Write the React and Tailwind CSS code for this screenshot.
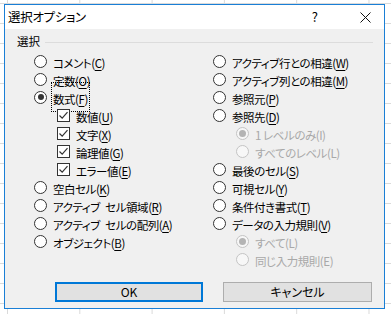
import React from "react";

const font = "[font-family:'Noto_Sans_CJK_JP','Noto_Sans',sans-serif] [font-feature-settings:'palt']";

function Radio({ checked, disabled }) {
  return (
    <span
      className={`flex items-center justify-center w-[13px] h-[13px] rounded-full border shrink-0 ${
        disabled ? "border-[#c4c4c4] bg-[#f7f7f7]" : "border-[#333333] bg-white"
      }`}
    >
      {checked && (
        <span
          className={`rounded-full ${
            disabled ? "w-[7px] h-[7px] bg-[#b4b4b4]" : "w-[6px] h-[6px] bg-[#333333]"
          }`}
        />
      )}
    </span>
  );
}

function Check() {
  return (
    <span className="flex items-center justify-center w-[13px] h-[13px] border border-[#333333] bg-white shrink-0">
      <svg width="11" height="11" viewBox="0 0 11 11">
        <path d="M1.5 5.5 L4.2 8.2 L9.5 2.2" fill="none" stroke="#333333" strokeWidth="1.2" />
      </svg>
    </span>
  );
}

function Label({ text, k, disabled, noUnderline }) {
  return (
    <span
      className={`text-[11.5px] tracking-[-0.45px] leading-none whitespace-pre ${
        disabled ? "text-[#a8a8a8]" : "text-black"
      }`}
    >
      {text}(
      {noUnderline ? k : <span className="underline underline-offset-[2px]">{k}</span>})
    </span>
  );
}

function Row({ kind = "radio", checked, disabled, indent, focus, text, k, noUnderline }) {
  return (
    <div className={`flex items-center h-[18px] ${indent ? "pl-[23px]" : ""}`}>
      {kind === "check" ? <Check /> : <Radio checked={checked} disabled={disabled} />}
      <span
        className={`ml-[4px] px-[1px] py-[2px] ${
          focus ? "border border-dotted border-black" : "border border-transparent"
        }`}
      >
        <Label text={text} k={k} disabled={disabled} noUnderline={noUnderline} />
      </span>
    </div>
  );
}

const leftRows = [
  { text: "コメント", k: "C" },
  { text: "定数", k: "O" },
  { text: "数式", k: "F", checked: true, focus: true },
  { kind: "check", indent: true, text: "数値", k: "U" },
  { kind: "check", indent: true, text: "文字", k: "X" },
  { kind: "check", indent: true, text: "論理値", k: "G" },
  { kind: "check", indent: true, text: "エラー値", k: "E" },
  { text: "空白セル", k: "K" },
  { text: "アクティブ\u2002セル領域", k: "R" },
  { text: "アクティブ\u2002セルの配列", k: "A" },
  { text: "オブジェクト", k: "B" },
];

const rightRows = [
  { text: "アクティブ行との相違", k: "W" },
  { text: "アクティブ列との相違", k: "M" },
  { text: "参照元", k: "P" },
  { text: "参照先", k: "D" },
  { indent: true, disabled: true, checked: true, text: "1 レベルのみ", k: "I", noUnderline: true },
  { indent: true, disabled: true, text: "すべてのレベル", k: "L", noUnderline: true },
  { text: "最後のセル", k: "S" },
  { text: "可視セル", k: "Y" },
  { text: "条件付き書式", k: "T" },
  { text: "データの入力規則", k: "V" },
  { indent: true, disabled: true, checked: true, text: "すべて", k: "L", noUnderline: true },
  { indent: true, disabled: true, text: "同じ入力規則", k: "E", noUnderline: true },
];

export default function App() {
  return (
    <div
      className={`w-[391px] h-[314px] overflow-hidden bg-white pt-[4px] pl-[4px] ${font} bg-[linear-gradient(to_right,#dadada_1px,transparent_1px),linear-gradient(to_bottom,#dadada_1px,transparent_1px)] bg-[size:72.3px_20px] bg-[position:7px_3px]`}
    >
      {/* dialog */}
      <div className="w-[381px] h-[305px] border border-[#1a7fd6] bg-[#f0f0f0] flex flex-col">
        {/* title bar */}
        <div className="h-[24px] bg-white flex items-center shrink-0">
          <span className="ml-[3px] text-[12.5px] tracking-[-0.3px] text-black">選択オプション</span>
          <span className="ml-auto mr-[42px] text-[13px] text-black">?</span>
          <svg className="mr-[13px]" width="11" height="11" viewBox="0 0 11 11">
            <path d="M0.5 0.5 L10.5 10.5 M10.5 0.5 L0.5 10.5" stroke="#111" strokeWidth="1" />
          </svg>
        </div>

        {/* group */}
        <div className="flex items-center h-[16px] mt-[5px] pl-[12px] pr-[11px]">
          <span className="text-[11.5px] leading-none text-black">選択</span>
          <div className="flex-1 ml-[5px] h-px bg-[#dcdcdc]" />
        </div>

        <div className="flex mt-[2px] pl-[29px]">
          <div className="flex flex-col w-[179px]">
            {leftRows.map((r, i) => (
              <Row key={i} {...r} />
            ))}
          </div>
          <div className="flex flex-col">
            {rightRows.map((r, i) => (
              <Row key={i} {...r} />
            ))}
          </div>
        </div>

        {/* buttons */}
        <div className="flex mt-auto mb-[6px] pl-[50px] gap-[20px]">
          <button className="w-[148px] h-[20px] border-2 border-[#0078d7] bg-[#e1e1e1] text-[12px] text-black flex items-center justify-center">
            OK
          </button>
          <button className="w-[149px] h-[20px] border border-[#adadad] bg-[#e1e1e1] text-[12px] text-black flex items-center justify-center">
            キャンセル
          </button>
        </div>
      </div>
    </div>
  );
}
